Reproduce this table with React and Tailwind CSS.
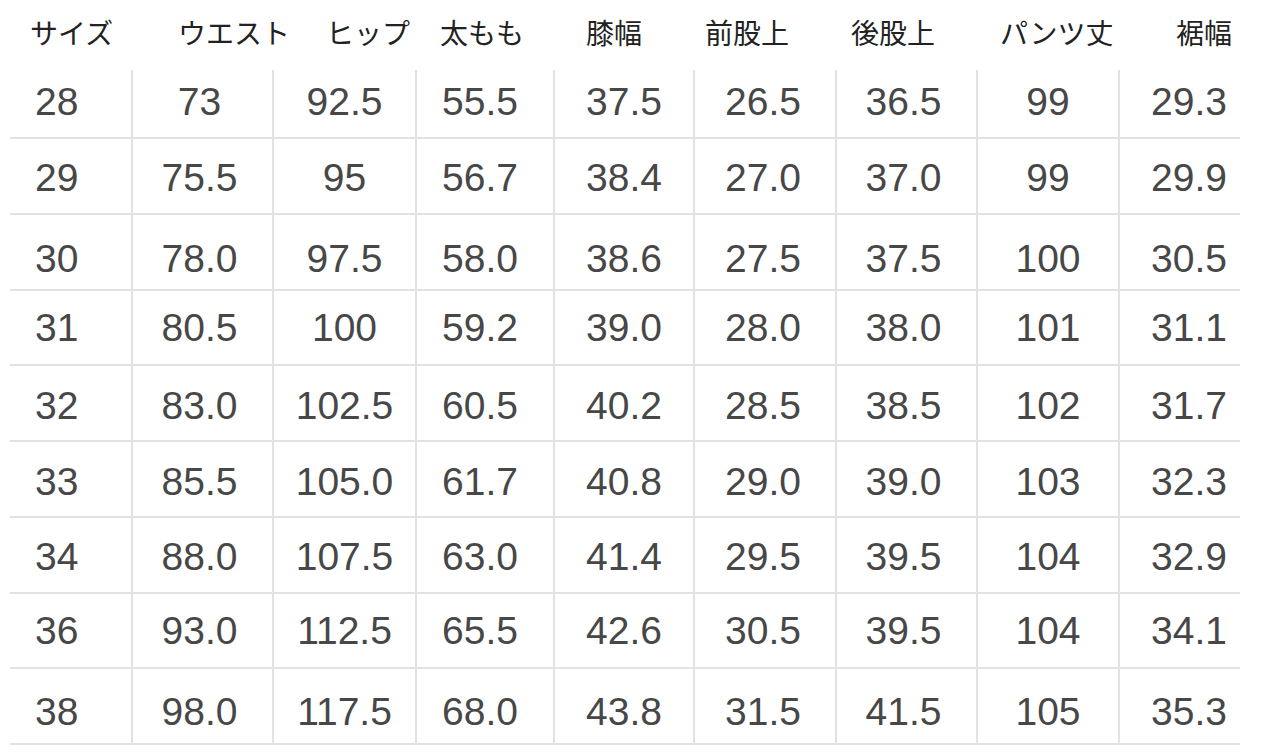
const HEADERS = [
    { label: 'サイズ', pad: 'pl-[20px]' },
    { label: 'ウエスト', pad: 'pl-[47px]' },
    { label: 'ヒップ', pad: 'pl-[54px]' },
    { label: '太もも', pad: 'pl-[25px]' },
    { label: '膝幅', pad: 'pl-[33px]' },
    { label: '前股上', pad: 'pl-[12px]' },
    { label: '後股上', pad: 'pl-[16px]' },
    { label: 'パンツ丈', pad: 'pl-[24px]' },
    { label: '裾幅', pad: 'pl-[58px]' },
];

// how each column sits its numbers
const ALIGN = [
    'justify-start pl-[25px]',
    'justify-center pr-[6px]',
    'justify-center',
    'justify-start pl-[25px]',
    'justify-center',
    'justify-center pr-[4px]',
    'justify-center pr-[6px]',
    'justify-center',
    'justify-center pl-[18px]',
];

const ROWS = [
    { h: 'h-[69px]', pad: 'pb-[3px]', cells: ['28', '73', '92.5', '55.5', '37.5', '26.5', '36.5', '99', '29.3'] },
    { h: 'h-[76px]', pad: 'pt-[5px]', cells: ['29', '75.5', '95', '56.7', '38.4', '27.0', '37.0', '99', '29.9'] },
    { h: 'h-[76px]', pad: 'pt-[15px]', cells: ['30', '78.0', '97.5', '58.0', '38.6', '27.5', '37.5', '100', '30.5'] },
    { h: 'h-[75px]', pad: 'pt-[2px]', cells: ['31', '80.5', '100', '59.2', '39.0', '28.0', '38.0', '101', '31.1'] },
    { h: 'h-[76px]', pad: 'pt-[7px]', cells: ['32', '83.0', '102.5', '60.5', '40.2', '28.5', '38.5', '102', '31.7'] },
    { h: 'h-[76px]', pad: 'pt-[7px]', cells: ['33', '85.5', '105.0', '61.7', '40.8', '29.0', '39.0', '103', '32.3'] },
    { h: 'h-[76px]', pad: 'pt-[5px]', cells: ['34', '88.0', '107.5', '63.0', '41.4', '29.5', '39.5', '104', '32.9'] },
    { h: 'h-[75px]', pad: 'pt-[1px]', cells: ['36', '93.0', '112.5', '65.5', '42.6', '30.5', '39.5', '104', '34.1'] },
    { h: 'h-[76px]', pad: 'pt-[13px]', cells: ['38', '98.0', '117.5', '68.0', '43.8', '31.5', '41.5', '105', '35.3'] },
];

const GRID = 'grid grid-cols-[121px_141px_143px_138px_140px_142px_141px_142px_122px]';

export default function App() {
    return (
        <div className="min-h-screen bg-white">
            <div className="ml-[10px] w-[1230px]">
                {/* Header */}
                <div className={`${GRID} h-[70px]`}>
                    {HEADERS.map((h) => (
                        <div
                            key={h.label}
                            className={`flex items-center whitespace-nowrap pb-[7px] ${h.pad} text-[28px] text-[#222] font-['Noto_Sans_CJK_JP',sans-serif]`}
                        >
                            {h.label}
                        </div>
                    ))}
                </div>

                {/* Body */}
                {ROWS.map((row) => (
                    <div key={row.cells[0]} className={`${GRID} ${row.h} border-b-2 border-[#e2e2e2]`}>
                        {row.cells.map((v, i) => (
                            <div
                                key={i}
                                className={`flex items-center ${row.pad} ${ALIGN[i]} ${i > 0 ? 'border-l-2 border-[#e2e2e2]' : ''} text-[39px] text-[#474747] font-['Liberation_Sans',Arial,sans-serif]`}
                            >
                                {v}
                            </div>
                        ))}
                    </div>
                ))}
            </div>
        </div>
    );
}
